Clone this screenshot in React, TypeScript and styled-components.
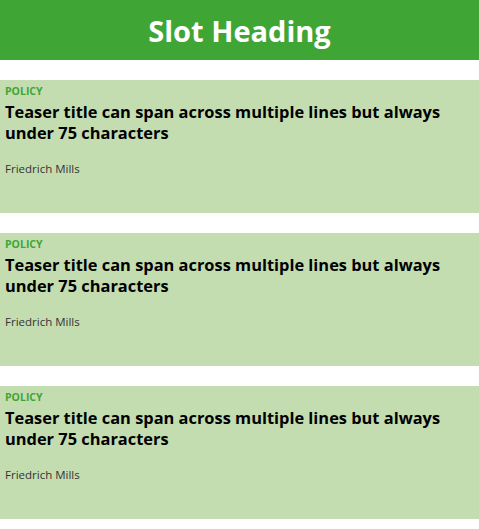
import styled, { createGlobalStyle } from "styled-components";

const GlobalStyle = createGlobalStyle`
  body {
    margin: 0;
    font-family: "Open Sans", Lato, sans-serif;
    background: #fff;
  }
`;

const teasers = [1, 2, 3].map((id) => ({
  id,
  category: "POLICY",
  title: "Teaser title can span across multiple lines but always under 75 characters",
  author: "Friedrich Mills",
}));

const App = () => {
  return (
    <>
      <GlobalStyle />
      <Slot>
        <Heading>Slot Heading</Heading>
        <TeaserList>
          {teasers.map((teaser) => (
            <Teaser key={teaser.id}>
              <Category>{teaser.category}</Category>
              <Title>{teaser.title}</Title>
              <Author>{teaser.author}</Author>
            </Teaser>
          ))}
        </TeaserList>
      </Slot>
    </>
  );
};

export default App;

/*
Styles
*/

const Slot = styled.div`
  display: flex;
  flex-direction: column;
  width: 479px;
`;

const Heading = styled.h2`
  margin: 0;
  height: 60px;
  display: flex;
  justify-content: center;
  align-items: center;
  background: #3fa535;
  color: #fff;
  font-size: 29px;
  font-weight: 700;
`;

const TeaserList = styled.div`
  display: flex;
  flex-direction: column;
  gap: 20px;
  padding: 20px 0 10px;
`;

const Teaser = styled.article`
  height: 133px;
  box-sizing: border-box;
  padding: 4px 5px 0;
  background: #c3ddb1;
`;

const Category = styled.div`
  color: #3fa535;
  font-size: 10.5px;
  font-weight: 700;
  line-height: 14px;
`;

const Title = styled.h3`
  margin: 3px 0 0;
  color: #000;
  font-size: 16.4px;
  font-weight: 700;
  line-height: 21px;
`;

const Author = styled.div`
  margin-top: 18px;
  color: #333;
  font-size: 11.5px;
  line-height: 16px;
`;
